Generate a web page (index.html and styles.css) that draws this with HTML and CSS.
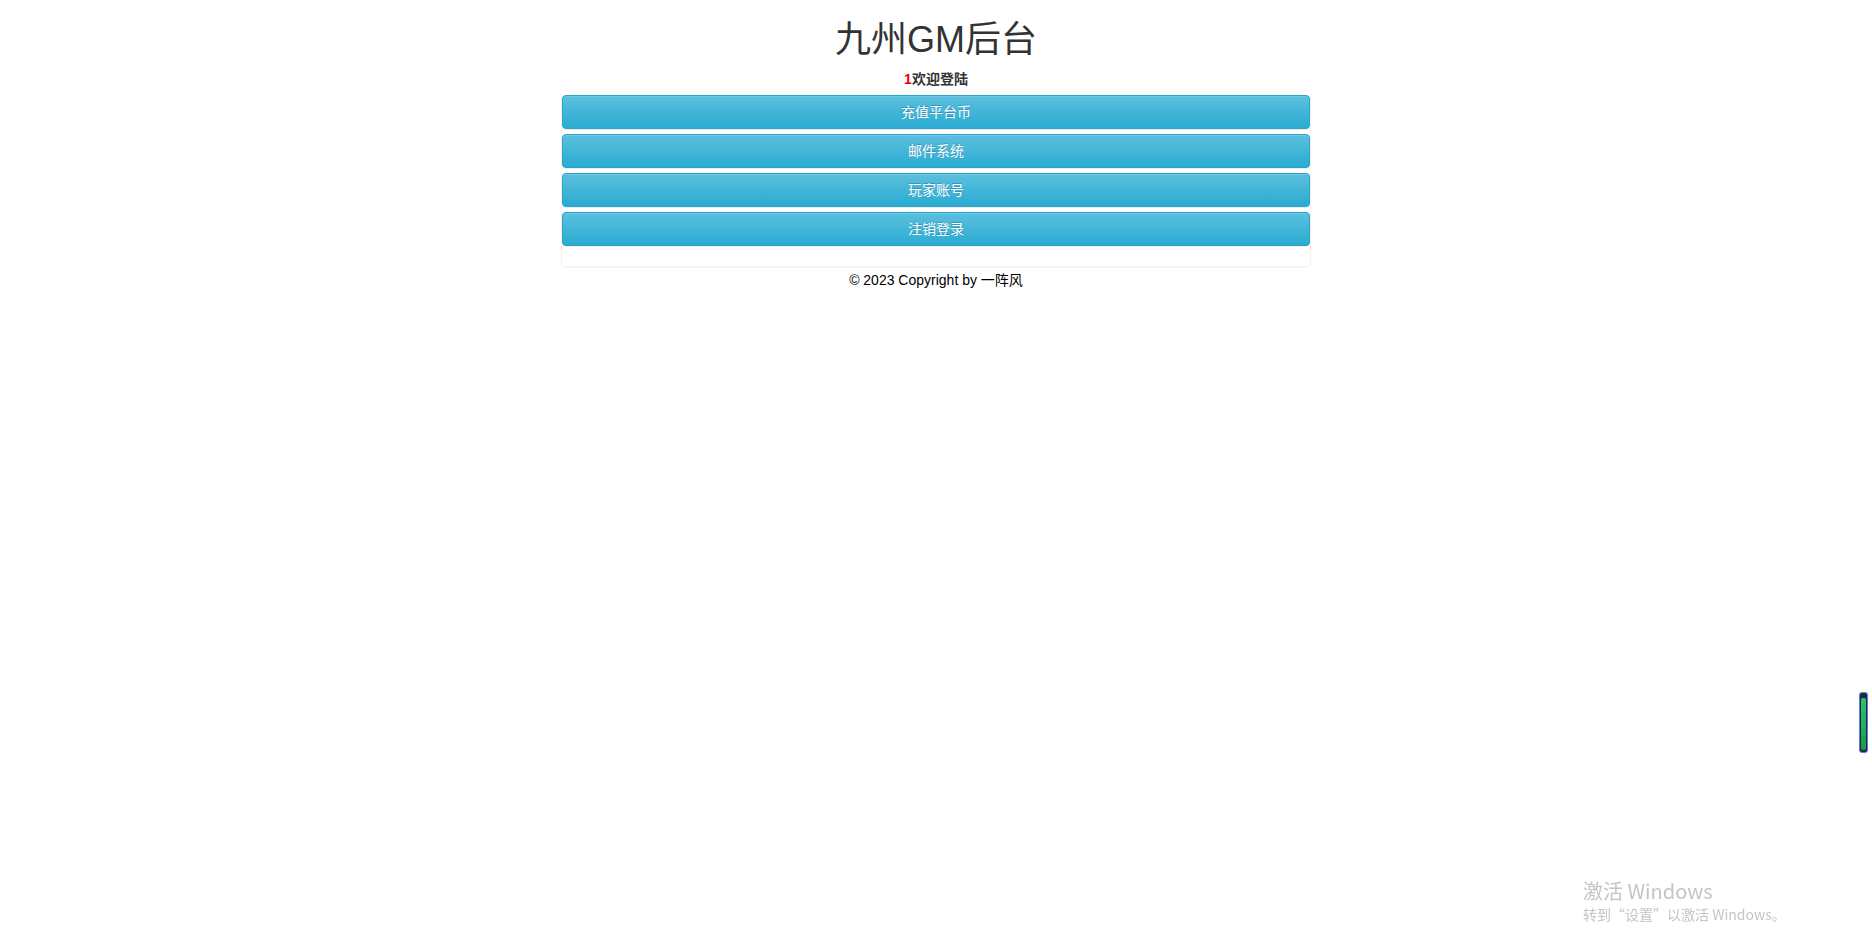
FILE: index.html
```html
<!DOCTYPE html>
<html lang="zh-CN">
<head>
<meta charset="utf-8">
<title>九州GM后台</title>
<link rel="stylesheet" href="styles.css">
</head>
<body>
<div class="page">
  <h1 class="title">九州GM后台</h1>
  <div class="welcome"><span class="uid">1</span>欢迎登陆</div>
  <div class="panel">
    <a class="btn">充值平台币</a>
    <a class="btn">邮件系统</a>
    <a class="btn">玩家账号</a>
    <a class="btn">注销登录</a>
  </div>
  <div class="footer">© 2023 Copyright by 一阵风</div>
</div>
<div class="widget"><div class="widget-fill"></div></div>
<div class="watermark">
  <div class="wm-title">激活 Windows</div>
  <div class="wm-sub">转到“设置”以激活 Windows。</div>
</div>
</body>
</html>
```
FILE: styles.css
```css
html, body {
  margin: 0;
  padding: 0;
  background: #fff;
}
body {
  font-family: "Liberation Sans", "Noto Sans CJK SC", sans-serif;
  font-size: 14px;
  line-height: 20px;
  color: #333;
  min-height: 947px;
}
.page {
  width: 750px;
  margin: 0 auto;
  display: flex;
  flex-direction: column;
  align-items: stretch;
}
.title {
  margin: 20px 0 9px;
  font-size: 36px;
  line-height: 40px;
  font-weight: 400;
  text-align: center;
  color: #333;
}
.welcome {
  text-align: center;
  font-weight: bold;
  color: #333;
}
.uid {
  color: #e00;
}
.panel {
  margin-top: 5px;
  border: 1px solid #f2f2f2;
  border-top: none;
  border-radius: 0 0 4px 4px;
  box-shadow: 0 1px 1px rgba(0,0,0,0.03);
  padding: 1px 0 20px;
  display: flex;
  flex-direction: column;
  gap: 5px;
}
.btn {
  display: block;
  height: 34px;
  box-sizing: border-box;
  padding: 6px 12px;
  line-height: 20px;
  text-align: center;
  color: #fff;
  font-size: 14px;
  border: 1px solid #28a4c9;
  border-radius: 4px;
  background-color: #5bc0de;
  background-image: linear-gradient(to bottom, #5bc0de 0, #2aabd2 100%);
  text-shadow: 0 -1px 0 rgba(0,0,0,0.2);
  box-shadow: inset 0 1px 0 rgba(255,255,255,0.15), 0 1px 1px rgba(0,0,0,0.075);
  cursor: pointer;
}
.footer {
  margin-top: 3px;
  text-align: center;
  color: #000;
}
.widget {
  position: fixed;
  left: 1859px;
  top: 692px;
  width: 9px;
  height: 61px;
  border: 1px solid #5a7cf0;
  border-radius: 3px;
  background: #1f2a36;
  padding: 5px 1px 2px;
  box-sizing: border-box;
}
.widget-fill {
  width: 100%;
  height: 100%;
  border-radius: 2px;
  background: linear-gradient(to bottom, #2ec36a, #1a9a4c);
}
.watermark {
  position: fixed;
  left: 1583px;
  top: 878px;
  color: #c4c4c4;
  font-family: "Noto Sans CJK SC", "Liberation Sans", sans-serif;
}
.wm-title {
  font-size: 20px;
  line-height: 26px;
}
.wm-sub {
  font-size: 14px;
  line-height: 20px;
}
```
